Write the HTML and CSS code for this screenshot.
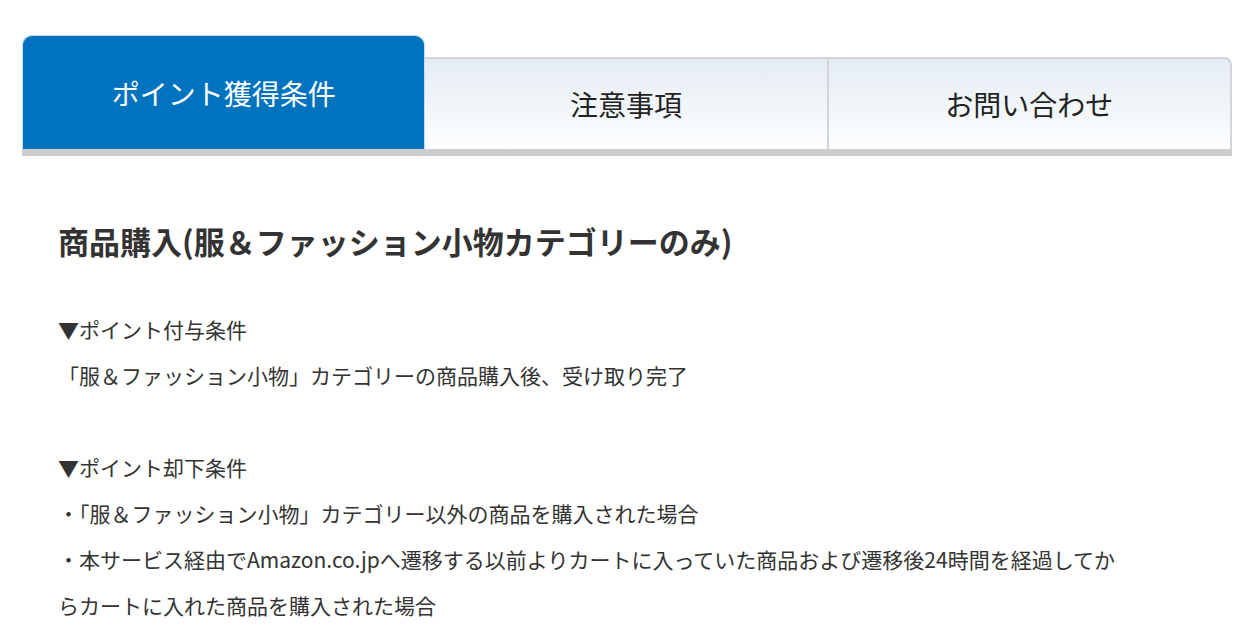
FILE: index.html
```html
<!DOCTYPE html>
<html lang="ja">
<head>
  <meta charset="utf-8">
  <title>ポイント獲得条件</title>
  <link rel="stylesheet" href="styles.css">
</head>
<body>
  <div class="wrap">
    <div class="tabs">
      <div class="tab active">ポイント獲得条件</div>
      <div class="tab">注意事項</div>
      <div class="tab last">お問い合わせ</div>
    </div>

    <div class="content">
      <h2>商品購入(服＆ファッション小物カテゴリーのみ)</h2>
      <p>
        ▼ポイント付与条件<br>
        「服＆ファッション小物」カテゴリーの商品購入後、受け取り完了<br>
        <br>
        ▼ポイント却下条件<br>
        ・「服＆ファッション小物」カテゴリー以外の商品を購入された場合<br>
        ・本サービス経由でAmazon.co.jpへ遷移する以前よりカートに入っていた商品および遷移後24時間を経過してからカートに入れた商品を購入された場合
      </p>
    </div>
  </div>
</body>
</html>
```

FILE: styles.css
```css
body {
  margin: 0;
  background: #fff;
  color: #333;
  font-family: "Noto Sans CJK JP", "Noto Sans", sans-serif;
}
.wrap {
  width: 1210px;
  margin: 35px 0 0 22px;
}
.tabs {
  display: flex;
  align-items: flex-end;
  border-bottom: 7px solid #cdcdcd;
}
.tab {
  flex: 1;
  height: 92px;
  display: flex;
  align-items: center;
  justify-content: center;
  font-size: 28px;
  color: #222;
  background: linear-gradient(#e4ecf3, #fdfeff);
  border: 2px solid #d2d6da;
  border-bottom: none;
  border-left: none;
  box-sizing: border-box;
}
.tab.active {
  height: 114px;
  background: #0073be;
  color: #fff;
  border: 1px solid #c9d9e8;
  border-bottom: none;
  border-radius: 10px 10px 0 0;
}
.tab.last {
  border-radius: 0 8px 0 0;
}
.content {
  padding: 0 0 0 36px;
  width: 1065px;
}
h2 {
  margin: 60px 0 0;
  font-size: 31px;
  font-weight: bold;
  line-height: 50px;
  white-space: nowrap;
}
p {
  margin: 40px 0 0;
  font-size: 21px;
  line-height: 46px;
}
```
